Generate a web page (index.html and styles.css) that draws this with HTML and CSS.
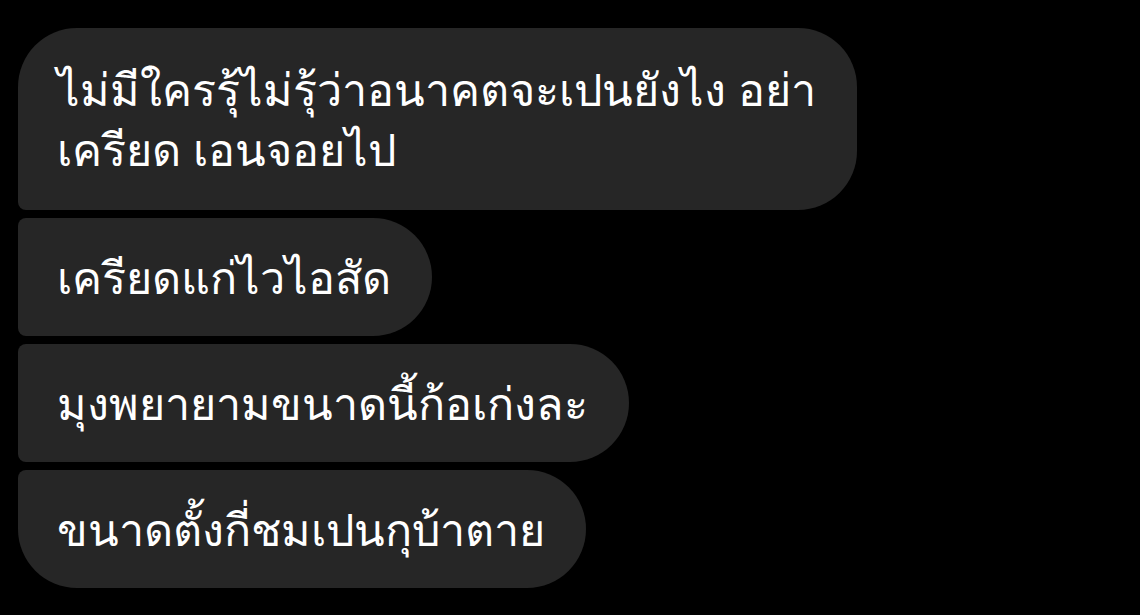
FILE: index.html
```html
<!DOCTYPE html>
<html lang="th">
<head>
<meta charset="utf-8">
<link rel="stylesheet" href="styles.css">
</head>
<body>
<div class="chat">
  <div class="bubble first">ไม่มีใครรุ้ไม่รุ้ว่าอนาคตจะเปนยังไง อย่า<br>เครียด เอนจอยไป</div>
  <div class="bubble mid">เครียดแก่ไวไอสัด</div>
  <div class="bubble mid">มุงพยายามขนาดนี้ก้อเก่งละ</div>
  <div class="bubble last">ขนาดตั้งกี่ชมเปนกุบ้าตาย</div>
</div>
</body>
</html>
```

FILE: styles.css
```css
html, body {
  margin: 0;
  padding: 0;
  background: #000;
  height: 100%;
}
.chat {
  display: flex;
  flex-direction: column;
  align-items: flex-start;
  gap: 8px;
  padding: 28px 0 0 18px;
}
.bubble {
  background: #262626;
  color: #fff;
  font-family: "Noto Sans", "DejaVu Sans", sans-serif;
  font-size: 44.9px;
  line-height: 60px;
  padding: 29px 41px 29px 39px;
  border-radius: 8px 59px 59px 8px;
  white-space: nowrap;
}
.first {
  padding-top: 31px;
  padding-bottom: 31px;
  border-radius: 59px 59px 59px 8px;
}
.last {
  border-radius: 8px 59px 59px 59px;
}
```
